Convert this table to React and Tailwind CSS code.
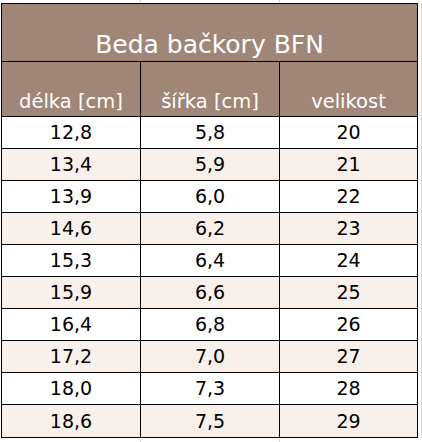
import React from 'react';

const rows = [
  ['12,8', '5,8', '20'],
  ['13,4', '5,9', '21'],
  ['13,9', '6,0', '22'],
  ['14,6', '6,2', '23'],
  ['15,3', '6,4', '24'],
  ['15,9', '6,6', '25'],
  ['16,4', '6,8', '26'],
  ['17,2', '7,0', '27'],
  ['18,0', '7,3', '28'],
  ['18,6', '7,5', '29'],
];

const font = { fontFamily: '"DejaVu Sans", Verdana, sans-serif' };

const GridStrip = ({ h }) => (
  <div className={`flex ${h}`}>
    <div className="w-[141px] border-r border-[#d9d9d9]" />
    <div className="w-[139px] border-r border-[#d9d9d9]" />
    <div className="flex-1" />
  </div>
);

export default function App() {
  return (
    <div className="w-[422px] h-[442px] bg-white overflow-hidden" style={font}>
      <GridStrip h="h-[3px]" />
      <div className="flex">
        <div className="ml-px w-[417px] border border-black">
          <div className="h-[58px] bg-[#a08676] border-b border-black flex items-end justify-center pb-[4px]">
            <span className="text-white text-[25px] leading-none">Beda bačkory BFN</span>
          </div>
          <div className="grid grid-cols-[139px_139px_1fr] h-[55px] bg-[#a08676] border-b border-black text-white text-[19.5px] leading-none">
            <div className="border-r border-black flex items-end justify-center pb-[5px]">délka [cm]</div>
            <div className="border-r border-black flex items-end justify-center pb-[5px]">šířka [cm]</div>
            <div className="flex items-end justify-center pb-[5px]">velikost</div>
          </div>
          {rows.map((r, i) => (
            <div
              key={i}
              className={`grid grid-cols-[139px_139px_1fr] h-[32px] text-black text-[19px] leading-none ${i < rows.length - 1 ? 'border-b border-black' : ''} ${i % 2 === 1 ? 'bg-[#f8f0ea]' : 'bg-white'}`}
            >
              <div className="border-r border-black flex items-end justify-center pb-[6px]">{r[0]}</div>
              <div className="border-r border-black flex items-end justify-center pb-[6px]">{r[1]}</div>
              <div className="flex items-end justify-center pb-[6px]">{r[2]}</div>
            </div>
          ))}
        </div>
        <div className="flex-1 border-r border-[#d9d9d9]" />
      </div>
      <GridStrip h="h-[4px]" />
    </div>
  );
}
